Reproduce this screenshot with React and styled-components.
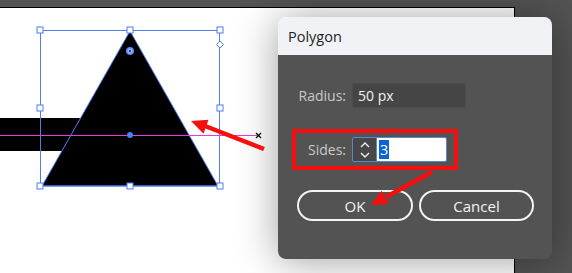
import React from 'react';
import styled, { createGlobalStyle } from 'styled-components';

const GlobalStyle = createGlobalStyle`
  html, body {
    margin: 0;
    padding: 0;
    background: #535353;
    overflow: hidden;
  }
`;

const Workspace = styled.div`
  position: relative;
  width: 572px;
  height: 273px;
  background: #535353;
  padding-top: 7px;
  box-sizing: border-box;
  font-family: "Open Sans", "Noto Sans", sans-serif;
`;

const Artboard = styled.div`
  position: relative;
  width: 515px;
  height: 266px;
  box-sizing: border-box;
  background: #ffffff;
  border-top: 1px solid #000;
  border-right: 1px solid #000;
`;

const Drawing = styled.svg`
  position: absolute;
  left: 0;
  top: -8px;
  width: 515px;
  height: 273px;
`;

const Dialog = styled.div`
  position: absolute;
  left: 278px;
  top: 17px;
  width: 274px;
  height: 242px;
  border-radius: 8px;
  overflow: hidden;
  display: flex;
  flex-direction: column;
  box-shadow: 0 2px 40px rgba(0, 0, 0, 0.38);
`;

const TitleBar = styled.div`
  height: 38px;
  flex: none;
  display: flex;
  align-items: center;
  padding-left: 10px;
  background: #f0f2f5;
  color: #1e1e1e;
  font-size: 14.5px;
`;

const Body = styled.div`
  flex: 1;
  background: #535353;
  padding: 20px 14px 0;
  display: flex;
  flex-direction: column;
  align-items: flex-start;
`;

const Row = styled.div`
  display: flex;
  align-items: center;
  gap: 6px;
  padding: 4px 7px 4px 0;
  border: 4px solid ${p => (p.$highlight ? '#f50f0f' : 'transparent')};
  margin-bottom: ${p => p.$mb || 0}px;
`;

const Label = styled.label`
  width: 50px;
  text-align: right;
  color: #c9c9c9;
  font-size: 14px;
  white-space: nowrap;
`;

const TextField = styled.div`
  width: 114px;
  height: 25px;
  box-sizing: border-box;
  background: #454545;
  border: 1px solid #4c4c4c;
  border-radius: 2px;
  color: #f2f2f2;
  font-size: 14px;
  display: flex;
  align-items: center;
  padding-left: 5px;
`;

const Stepper = styled.div`
  display: flex;
  height: 25px;
  width: 95px;
  box-sizing: border-box;
  border: 1px solid #5b87cc;
  border-radius: 2px;
  overflow: hidden;
`;

const Spin = styled.div`
  width: 23px;
  flex: none;
  background: #474747;
  border-right: 1px solid #5b87cc;
  display: flex;
  align-items: center;
  justify-content: center;
`;

const NumberInput = styled.div`
  flex: 1;
  background: #ffffff;
  display: flex;
  align-items: center;
  padding-left: 2px;
  font-size: 14.5px;
`;

const Selected = styled.span`
  background: #0a64d2;
  color: #ffffff;
  padding: 0 1px;
  line-height: 19px;
`;

const Buttons = styled.div`
  display: flex;
  gap: 6px;
  margin-top: 20px;
  margin-left: 5px;
`;

const Button = styled.button`
  width: ${p => p.$w}px;
  height: 31px;
  border: 2px solid #f4f4f4;
  border-radius: 16px;
  background: transparent;
  color: #f4f4f4;
  font-family: inherit;
  font-size: 15px;
  padding: 0;
`;

const Annotations = styled.svg`
  position: absolute;
  left: 0;
  top: 0;
  width: 572px;
  height: 273px;
  pointer-events: none;
`;

const BLUE = '#4f7ef2';

const Handle = ({ x, y }) => (
  <rect x={x - 3} y={y - 3} width="6" height="6" fill="#fff" stroke={BLUE} strokeWidth="1" />
);

export default function App() {
  const handles = [
    [40, 30], [130, 30], [220, 30],
    [40, 108], [220, 108],
    [40, 186], [130, 186], [220, 186],
  ];
  return (
    <>
      <GlobalStyle />
      <Workspace>
        <Artboard>
          <Drawing viewBox="0 0 515 273">
            <rect x="0" y="118" width="130" height="33" fill="#000" />
            <polygon points="130,31 42,186 218,186" fill="#000" stroke={BLUE} strokeWidth="1" />
            <rect x="40.5" y="30.5" width="179" height="155.5" fill="none" stroke={BLUE} strokeWidth="1" />
            <line x1="0" y1="135.5" x2="258" y2="135.5" stroke="#e03ce0" strokeWidth="1" />
            <path d="M256 133 l5 5 M261 133 l-5 5" stroke="#000" strokeWidth="1.2" />
            <circle cx="130" cy="135" r="3" fill={BLUE} />
            <circle cx="130" cy="51" r="3.4" fill="#8fb0fa" stroke={BLUE} strokeWidth="1.3" />
            <circle cx="130" cy="51" r="1" fill="#1a1a60" />
            <path d="M220 41 l3.5 3.5 -3.5 3.5 -3.5 -3.5 z" fill="#fff" stroke={BLUE} strokeWidth="1" />
            {handles.map(([x, y]) => <Handle key={`${x}-${y}`} x={x} y={y} />)}
          </Drawing>
        </Artboard>

        <Dialog>
          <TitleBar>Polygon</TitleBar>
          <Body>
            <Row $mb={13}>
              <Label>Radius:</Label>
              <TextField>50 px</TextField>
            </Row>
            <Row $highlight>
              <Label>Sides:</Label>
              <Stepper>
                <Spin>
                  <svg width="12" height="20" viewBox="0 0 12 20">
                    <path d="M2 7 L6 3 L10 7 M2 13 L6 17 L10 13" fill="none" stroke="#f0f0f0" strokeWidth="1.4" />
                  </svg>
                </Spin>
                <NumberInput><Selected>3</Selected></NumberInput>
              </Stepper>
            </Row>
            <Buttons>
              <Button $w={116}>OK</Button>
              <Button $w={115}>Cancel</Button>
            </Buttons>
          </Body>
        </Dialog>

        <Annotations viewBox="0 0 572 273">
          <line x1="264" y1="149" x2="205" y2="126" stroke="#f50f0f" strokeWidth="4.5" />
          <polygon points="191,121 208.5,119.8 203.5,133.8" fill="#f50f0f" />
          <line x1="432" y1="172" x2="386" y2="197" stroke="#f50f0f" strokeWidth="4.5" />
          <polygon points="371,205 388.8,204 381.5,190.8" fill="#f50f0f" />
        </Annotations>
      </Workspace>
    </>
  );
}
